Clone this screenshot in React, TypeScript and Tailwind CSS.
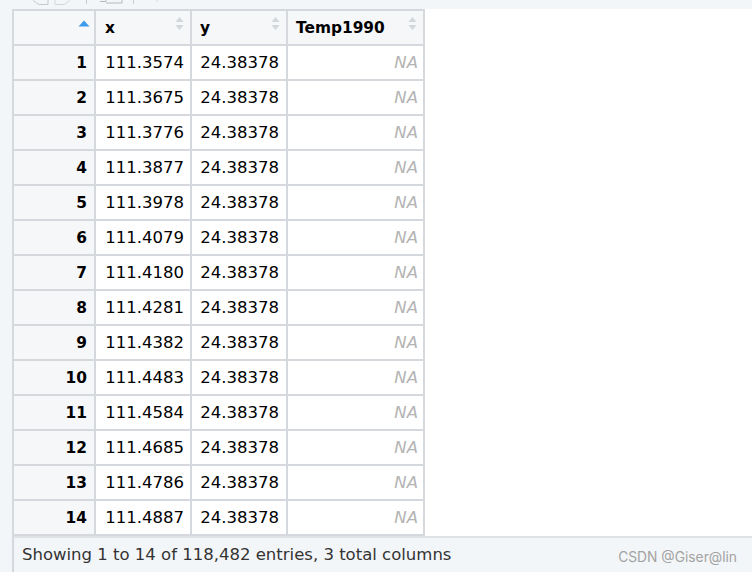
const rows = [
  "111.3574", "111.3675", "111.3776", "111.3877", "111.3978", "111.4079", "111.4180",
  "111.4281", "111.4382", "111.4483", "111.4584", "111.4685", "111.4786", "111.4887",
];

function SortIcon() {
  return (
    <svg width="9" height="13" viewBox="0 0 9 13" className="absolute right-[6px] top-[6px]">
      <path d="M4.5 0L8.5 5H0.5Z" fill="#d3d6da" />
      <path d="M4.5 13L8.5 8H0.5Z" fill="#d3d6da" />
    </svg>
  );
}

function Toolbar() {
  return (
    <div className="h-[9px] bg-[#f3f6f8] overflow-hidden">
      <svg width="180" height="9" viewBox="0 0 180 9">
        <path d="M33 0.5L39 4.5H48V0" fill="none" stroke="#c6cacd" />
        <path d="M55 0V4.5H64L70 0.5" fill="none" stroke="#d5d8db" />
        <path d="M86.5 0V4" stroke="#c6cacd" />
        <path d="M100 1.5H106V0M106 3H122V0" fill="none" stroke="#b5b9bd" />
        <path d="M133.5 0V4" stroke="#c6cacd" />
        <path d="M157 0V2" stroke="#d5d8db" />
      </svg>
    </div>
  );
}

export default function App() {
  return (
    <div className="w-[752px] h-[572px] overflow-hidden bg-white font-['DejaVu_Sans',sans-serif] text-[#000]">
      <Toolbar />
      <div className="flex h-[563px]">
        <div className="w-[14px] bg-[#f3f6f8] border-r-2 border-[#d5d9dd]" />
        <div className="flex-1 flex flex-col">
          <div className="h-[527px]">
            <div className="grid w-[411px] grid-cols-[82px_96px_96px_137px] border-t-2 border-[#d5d9dd] text-[16.5px]">
              <div className="relative h-[35px] bg-[#f5f7f9] border-r-2 border-b-2 border-[#d5d9dd]">
                <svg width="12" height="7" viewBox="0 0 12 7" className="absolute right-[4px] top-[9px]">
                  <path d="M6 0.5L11.5 6.5H0.5Z" fill="#3d9bed" />
                </svg>
              </div>
              <div className="relative flex items-center h-[35px] pl-[9px] pt-[2px] bg-[#f5f7f9] border-r-2 border-b-2 border-[#d5d9dd] font-bold text-[15.4px]">
                x<SortIcon />
              </div>
              <div className="relative flex items-center h-[35px] pl-[8px] pt-[2px] bg-[#f5f7f9] border-r-2 border-b-2 border-[#d5d9dd] font-bold text-[15.4px]">
                y<SortIcon />
              </div>
              <div className="relative flex items-center h-[35px] pl-[8px] pt-[2px] bg-[#f5f7f9] border-r-2 border-b-2 border-[#d5d9dd] font-bold text-[15.4px]">
                Temp1990<SortIcon />
              </div>
              {rows.map((x, i) => (
                <div key={i} className="contents">
                  <div className="flex items-center justify-end h-[35px] pr-[7px] pt-[2px] bg-[#f5f7f9] border-r-2 border-b-2 border-[#d5d9dd] font-bold text-[15.4px]">
                    {i + 1}
                  </div>
                  <div className="flex items-center justify-end h-[35px] pr-[6px] pt-[2px] border-r-2 border-b-2 border-[#d5d9dd]">
                    {x}
                  </div>
                  <div className="flex items-center justify-end h-[35px] pr-[7px] pt-[2px] border-r-2 border-b-2 border-[#d5d9dd]">
                    24.38378
                  </div>
                  <div className="flex items-center justify-end h-[35px] pr-[5px] pt-[2px] border-r-2 border-b-2 border-[#d5d9dd] italic text-[#b4b4b4]">
                    NA
                  </div>
                </div>
              ))}
            </div>
          </div>
          <div className="relative flex-1 flex items-center pl-[8px] bg-[#f3f6f8] border-t-2 border-[#dfe3e6] text-[16.5px] text-[#333]">
            Showing 1 to 14 of 118,482 entries, 3 total columns
            <span className="absolute right-[15px] top-[9px] font-['Inter',sans-serif] text-[13.8px] text-[#a3a3a3]">
              CSDN @Giser@lin
            </span>
          </div>
        </div>
      </div>
    </div>
  );
}
